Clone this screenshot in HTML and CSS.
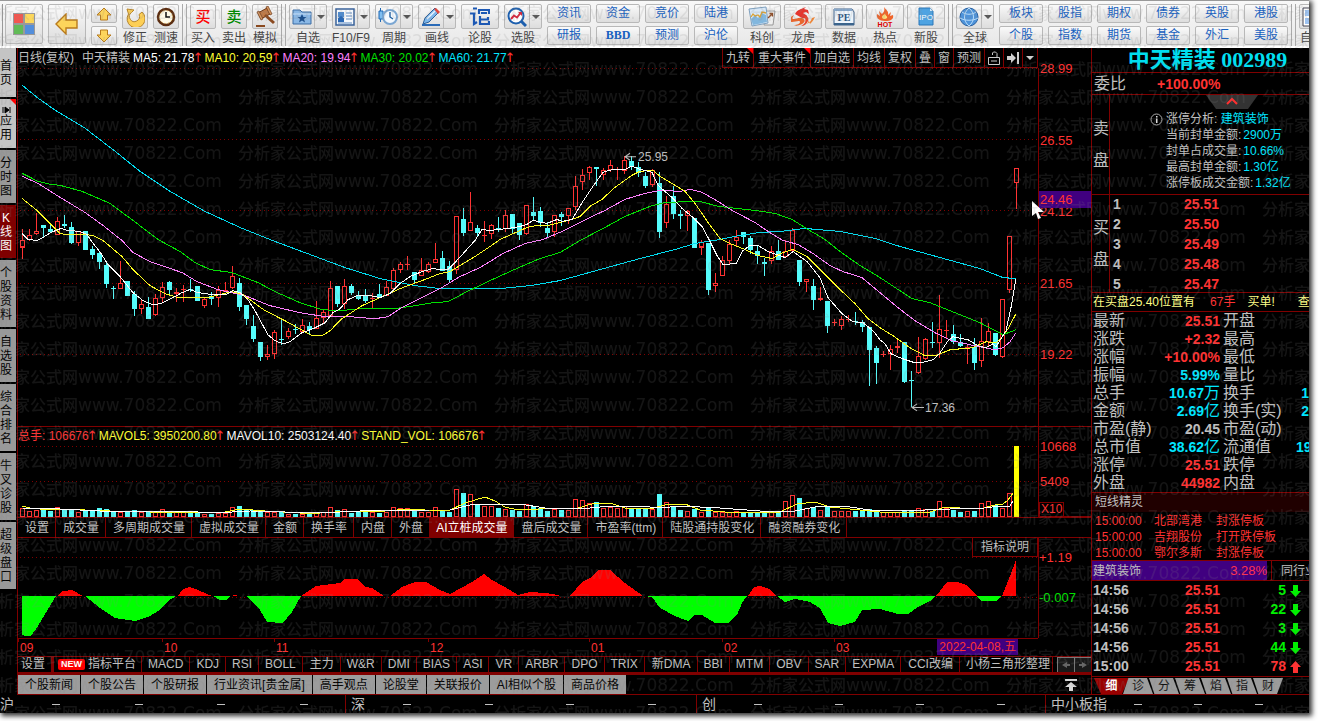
FILE: index.html
```html
<!DOCTYPE html>
<html lang="zh-CN">
<head>
<meta charset="utf-8">
<title>中天精装 002989</title>
<link rel="stylesheet" href="styles.css">
</head>
<body>
<div class="app">
<header class="toolbar">
  <div class="group first">
    <button class="big tall" aria-label="主页"><svg width="22" height="22" viewBox="0 0 22 22"><path fill="#999" d="M0 0h22v22H0z"/><path fill="#f4564f" d="M1 1h9v9H1z"/><path fill="#fcd75c" d="M12 1h9v9h-9z"/><path fill="#62bb57" d="M1 12h9v9H1z"/><path fill="#538edb" d="M12 12h9v9h-9z"/></svg></button>
    <button class="big tall" aria-label="返回"><svg width="24" height="22" viewBox="0 0 24 22"><path d="M1 11 11 1v6h11v8H11v6z" fill="#fdd45b" stroke="#b87a1c" stroke-width="1.4"/></svg></button>
    <div class="stack narrow">
      <button aria-label="上"><svg width="16" height="14" viewBox="0 0 16 14"><path d="M8 1 15 8h-3.500v5h-7V8H1z" fill="#fdd45b" stroke="#b87a1c"/></svg></button>
      <button aria-label="下"><svg width="16" height="14" viewBox="0 0 16 14"><path d="M8 13 15 6h-3.500V1h-7v5H1z" fill="#fdd45b" stroke="#b87a1c"/></svg></button>
    </div>
    <button class="tool small"><span class="face"><svg width="20" height="20" viewBox="0 0 20 20"><path d="M2 2l7 1-2.500 2.500a5 5 0 1 0 7.500 2l3-2.500A9 9 0 1 1 3.500 7z" fill="#fdcf55" stroke="#b5842c"/></svg></span>修正</button>
    <button class="tool small"><span class="face"><svg width="20" height="20" viewBox="0 0 20 20"><circle cx="10" cy="10" r="8" fill="#fffbe8" stroke="#5b2d10" stroke-width="2.500"/><circle cx="10" cy="10" r="6.500" fill="none" stroke="#d8a23a" stroke-dasharray="1 2.400"/><path d="M10 5v5h4" fill="none" stroke="#111" stroke-width="1.500"/></svg></span>测速</button>
  </div>
  <span class="sep"></span>
  <div class="group">
    <button class="tool small"><span class="face glyph buy" aria-hidden="true">买</span>买入</button>
    <button class="tool small"><span class="face glyph sell" aria-hidden="true">卖</span>卖出</button>
    <button class="tool small"><span class="face"><svg width="22" height="22" viewBox="0 0 22 22"><path d="M4 7l9-5 3 6-9 5z" fill="#c07a45" stroke="#6b3514"/><path d="M3 6l2-1 4 8-2 1zM12 1l2-1 4 8-2 1z" fill="#d99a62" stroke="#6b3514" stroke-width=".7"/><path d="M11 9l9 8" stroke="#8a4a20" stroke-width="3"/><path d="M2 20h9" stroke="#8a4a20" stroke-width="2"/></svg></span>模拟</button>
  </div>
  <span class="sep"></span>
  <div class="group">
    <button class="tool"><span class="face split"><svg width="20" height="18" viewBox="0 0 20 18"><path d="M1 16V2h7l2 2h9v12z" fill="#8ab8e6" stroke="#3a6ca5"/><path d="M1 6h18" stroke="#c8e0f8"/><path d="M10 6l1.500 3h3L12 11l1 3.500L10 12.500 7 14.500 8 11 5.500 9h3z" fill="#1c4f8c"/></svg><i></i></span>自选</button>
    <button class="tool"><span class="face split"><svg width="20" height="18" viewBox="0 0 20 18"><path d="M1 1h18v16H1z" fill="#f6f9fd" stroke="#38629a" stroke-width="1.500"/><path d="M3 4h6v5H3z" fill="#4d8bd0"/><path d="M3 10l3-2 3 2v4H3z" fill="#2a68b5"/><path d="M11 5h6M11 8h6M11 11h6M3 15h14" stroke="#5d89c0"/></svg><i></i></span>F10/F9</button>
    <button class="tool"><span class="face split"><svg width="20" height="20" viewBox="0 0 20 20"><path d="M2.500 1v14" stroke="#1e69b5"/><path d="M1 4h4v8H1z" fill="#7dbdf0" stroke="#1e69b5"/><circle cx="12" cy="10" r="7" fill="#f3f9ff" stroke="#7aa6d2" stroke-width="2"/><path d="M12 5v5l3 2" fill="none" stroke="#2260a0" stroke-width="1.400"/></svg><i></i></span>周期</button>
    <button class="tool"><span class="face split"><svg width="20" height="20" viewBox="0 0 20 20"><path d="M1 18h18" stroke="#2a6bb8" stroke-width="2"/><path d="M2 17l2-6L14 1l4 4L8 15z" fill="#7db6ea" stroke="#2b5f9a"/><path d="M13 2l2-1 4 4-2 2z" fill="#e0483e"/><path d="M6 12l8-8" stroke="#e9f4ff" stroke-width="1.500"/></svg><i></i></span>画线</button>
    <button class="tool"><span class="face"><svg width="20" height="19" viewBox="0 0 20 19"><path d="M3 1.500h4M0 6.500h5.500M4 6v11l3-2M9 7V3h10v4M11 6h6M10 9v8h9v-3M10 12.500h8V10" fill="none" stroke="#1c58b4" stroke-width="2.200"/></svg></span>论股</button>
    <button class="tool"><span class="face split"><svg width="20" height="20" viewBox="0 0 20 20"><circle cx="9" cy="9" r="7.500" fill="#fff" stroke="#1d5fae" stroke-width="2"/><path d="M14 14l5 5" stroke="#1d5fae" stroke-width="3"/><path d="M4 12l3-3.500 3 2L13.500 6" fill="none" stroke="#d6263c" stroke-width="2"/><path d="M11 5h4v4z" fill="#d6263c"/></svg><i></i></span>选股</button>
    <div class="stack"><button>资讯</button><button>研报</button></div>
    <div class="stack"><button>资金</button><button><b>BBD</b></button></div>
    <div class="stack"><button>竞价</button><button>预测</button></div>
    <div class="stack"><button>陆港</button><button>沪伦</button></div>
  </div>
  <div class="group tight">
    <button class="tool"><span class="face"><svg width="28" height="21" viewBox="0 0 28 21"><path d="M18 5h9l-2 14h-9z" fill="#eee" stroke="#999"/><path d="M1 3l17-2 2 16-16 3z" fill="#d9e9f8" stroke="#7e9fbd"/><path d="M3 13l4-4 3 3 4-5 4 2 1 7-14 3z" fill="#82b7de"/><path d="M3 11l2-3 2 2 3-1 2 2 2-5 4 1" fill="none" stroke="#d9a235" stroke-width="1.300"/><path d="M20 12l4-4M21.500 7.500h3v3" fill="none" stroke="#8d4a24" stroke-width="1.400"/></svg></span>科创</button>
    <button class="tool"><span class="face"><svg width="24" height="21" viewBox="0 0 24 21"><path d="M10 3l5-2-2 2 4 1 1 4-3-2-3 1 3 2c3 2 0 4-4 3L4 8C6 4 8 4 10 3z" fill="#e5352e"/><path d="M3 9c-2 3-2 4 0 4s5-2 8-1 4 4 0 6-6 2-8 1c3 0 6-1 6-3s-5 0-8 0-3-5 2-7z" fill="#e8662e"/><path d="M17 12c1 1 1 4-1 6 3-2 4-3 5-6l3-1c-1 2-2 4-5 7" fill="#ef8637"/><path d="M13 10c4 0 5 2 4 5s-4 5-7 5c4-2 6-5 3-10z" fill="#e8472e"/></svg></span>龙虎</button>
    <button class="tool"><span class="face"><svg width="22" height="18" viewBox="0 0 22 18"><path d="M1 1h18l2 3v13H1z" fill="#eef5fc" stroke="#3f638c"/><path d="M1 1h18v2H1z" fill="#87a8cb"/><path d="M1 16h20" stroke="#3b648c" stroke-width="2"/><text x="11" y="13" class="pe">PE</text></svg></span>数据</button>
    <button class="tool"><span class="face"><svg width="20" height="22" viewBox="0 0 20 22"><path d="M9 1c2 3 5 4 4 8l3-3-1 4 3-1c1 4-2 6-8 6S1 12 2 8l3 2-1-5 3 3c2-2 3-4 2-7z" fill="#f0642a"/><path d="M10 7c0 3 3 3 2 5-2 2-5 1-5-1s3-2 3-4z" fill="#ffe07a"/><text x="10" y="21" class="hot">HOT</text></svg></span>热点</button>
    <button class="tool"><span class="face"><svg width="16" height="19" viewBox="0 0 16 19"><path d="M1 1h11l3 3v14H1z" fill="#4ea3e2" stroke="#2a76b8"/><path d="M12 1v3h3" fill="#d4ebfc"/><text x="8" y="13" class="ipo">IPO</text></svg></span>新股</button>
  </div>
  <span class="sep"></span>
  <div class="group">
    <button class="tool"><span class="face split"><svg width="20" height="20" viewBox="0 0 20 20"><circle cx="10" cy="10" r="9" fill="#4d93da" stroke="#2c62a0"/><path d="M3 5c4 3 10 3 14 0M1 11c5 3 13 3 18 0M10 1c-6 5-6 13 0 18M10 1c6 5 6 13 0 18" fill="none" stroke="#b9dcf8"/></svg><i></i></span>全球</button>
    <div class="stack"><button>板块</button><button>个股</button></div>
    <div class="stack"><button>股指</button><button>指数</button></div>
    <div class="stack"><button>期权</button><button>期货</button></div>
    <div class="stack"><button>债券</button><button>基金</button></div>
    <div class="stack"><button>英股</button><button>外汇</button></div>
    <div class="stack"><button>港股</button><button>美股</button></div>
  </div>
  <span class="sep"></span>
  <div class="group">
    <button class="tool"><span class="face"><svg width="32" height="20" viewBox="0 0 32 20"><path d="M1 1h30v18H1z" fill="#fff" stroke="#445"/><path d="M3 3h7v6H3zM3 11h7v6H3z" fill="#9dc2f0"/></svg></span>自定义</button>
  </div>
</header>

<div class="main">
<nav class="side">
  <button class="light head">首页</button>
  <button class="light head corner"><svg width="9" height="8" viewBox="0 0 9 8"><path d="M1 1v6M3 1v6l4-3zM8 1v6" stroke="#000" fill="#000"/></svg>应用</button>
  <button>分时图</button>
  <button class="on">K线图</button>
  <button>个股资料</button>
  <button>自选股</button>
  <button>综合排名</button>
  <button>牛叉诊股</button>
  <button>超级盘口</button>
</nav>

<main class="center">
  <div class="legend-row">
    <div class="legend"><span>日线(复权)</span><span class="nm">中天精装</span><span class="w">MA5: 21.78<em>↑</em></span><span class="y">MA10: 20.59<em>↑</em></span><span class="p">MA20: 19.94<em>↑</em></span><span class="g">MA30: 20.02<em>↑</em></span><span class="c">MA60: 21.77<em>↑</em></span></div>
    <div class="mini"><button class="corner">九转</button><button class="corner wide">重大事件</button><button>加自选</button><button>均线</button><button>复权</button><button>叠</button><button>窗</button><button>预测</button><button aria-label="锁定"><svg width="12" height="14" viewBox="0 0 12 14"><path d="M.5 6.500h11v7H.5zM3 10h6M4.500 4V2l1-1h2l1.500 1.500V6" fill="none" stroke="#c8c8c8"/></svg></button><button aria-label="右移"><svg width="12" height="12" viewBox="0 0 12 12"><path d="M0 4h4V1l5 5-5 5V8H0zM10 0h2v12h-2z" fill="#d0d0d0"/></svg></button><button aria-label="更多"><svg width="8" height="4" viewBox="0 0 8 4"><path d="M0 0h8L4 4z" fill="#d0d0d0"/></svg></button></div>
    <div class="axis"></div>
  </div>
  <section class="pane price">
    <svg class="plot" id="price" viewBox="18 68 1020 357" preserveAspectRatio="none"></svg>
    <div class="axis ticks"><span>28.99</span><span>26.55</span><span>24.12</span><span>21.65</span><span>19.22</span><b class="cursor-price">24.46</b></div>
    <svg class="pointer" width="12" height="18" viewBox="0 0 12 18"><path d="M0 0v15l4-3 2 6 3-1-3-6h6z" fill="#fff"/></svg>
  </section>
  <div class="vol-legend"><div class="legend"><span class="r">总手: 106676<em>↑</em></span><span class="y">MAVOL5: 3950200.80<em>↑</em></span><span class="w">MAVOL10: 2503124.40<em>↑</em></span><span class="y">STAND_VOL: 106676<em>↑</em></span></div><div class="axis"></div></div>
  <section class="pane volume">
    <svg class="plot" id="volume" viewBox="18 446 1020 71" preserveAspectRatio="none"></svg>
    <div class="axis vticks"><span>10668</span><span>5409</span><span class="unit">X10</span></div>
  </section>
  <div class="tabs voltabs"><button>设置</button><button>成交量</button><button>多周期成交量</button><button>虚拟成交量</button><button>金额</button><button>换手率</button><button>内盘</button><button>外盘</button><button class="on">AI立桩成交量</button><button>盘后成交量</button><button>市盈率(ttm)</button><button>陆股通持股变化</button><button>融资融券变化</button></div>
  <section class="pane wave">
    <svg class="plot" id="wave" viewBox="18 538 1020 100" preserveAspectRatio="none"></svg>
    <div class="axis wticks"><span>+1.19</span><span class="g">-0.007</span></div>
    <button class="explain">指标说明</button>
  </section>
  <div class="dates"><span>09</span><span>10</span><span>11</span><span>12</span><span>01</span><span>02</span><span>03</span><b>2022-04-08,五</b></div>
  <div class="tabs indtabs"><button class="set">设置</button><button class="new"><mark>NEW</mark>指标平台</button><button>MACD</button><button>KDJ</button><button>RSI</button><button>BOLL</button><button class="cjk">主力</button><button>W&amp;R</button><button>DMI</button><button>BIAS</button><button>ASI</button><button>VR</button><button>ARBR</button><button>DPO</button><button>TRIX</button><button class="cjk">新DMA</button><button>BBI</button><button>MTM</button><button>OBV</button><button>SAR</button><button>EXPMA</button><button class="cjk">CCI改编</button><button class="last">小杨三角形整理</button><button class="scroll" aria-label="左"><svg width="8" height="6" viewBox="0 0 8 6"><path d="M0 3l5-3v2h3v2H5v2z" fill="#666"/></svg></button><button class="scroll" aria-label="右"><svg width="8" height="6" viewBox="0 0 8 6"><path d="M8 3L3 0v2H0v2h3v2z" fill="#666"/></svg></button></div>
  <div class="news"><button>个股新闻</button><button>个股公告</button><button>个股研报</button><button>行业资讯[贵金属]</button><button>高手观点</button><button>论股堂</button><button>关联报价</button><button>AI相似个股</button><button>商品价格</button><svg class="totop" width="12" height="12" viewBox="0 0 12 12"><path d="M0 0h12v2H0zM6 3l6 5H8v4H4V8H0z" fill="#d8d8d8"/></svg></div>
</main>

<aside class="quote">
  <h1>中天精装 <span>002989</span></h1>
  <div class="ratio"><span>委比</span><b>+100.00%</b></div>
  <div class="sellbox"><div class="vlabel">卖盘</div>
    <div class="limit">
      <svg class="fold" width="52" height="14" viewBox="0 0 52 14"><path d="M0 0h52L42 14H10z" fill="#333"/><path d="M21 9l5-5 5 5" fill="none" stroke="#ff3030" stroke-width="2"/></svg>
      <svg class="info" width="13" height="13" viewBox="0 0 13 13"><circle cx="6.500" cy="6.500" r="5.500" fill="none" stroke="#aaa"/><path d="M6 3h1.500v1.500H6zM6 5.500h1.500V10H6z" fill="#ddd"/></svg>
      <p>涨停分析: <a href="#sector">建筑装饰</a></p><p>当前封单金额:<i>2900万</i></p><p>封单占成交量:<i>10.66%</i></p><p>最高封单金额:<i>1.30亿</i></p><p>涨停板成交金额:<i>1.32亿</i></p>
    </div>
  </div>
  <div class="buybox"><div class="vlabel">买盘</div>
    <ol><li><span>1</span><b>25.51</b></li><li><span>2</span><b>25.50</b></li><li><span>3</span><b>25.49</b></li><li><span>4</span><b>25.48</b></li><li><span>5</span><b>25.47</b></li></ol>
  </div>
  <div class="notice"><span>在买盘25.40位置有</span><em>67手</em><span class="order">买单!</span><span>查</span></div>
  <table class="facts">
    <tr><th>最新</th><td class="r">25.51</td><th>开盘</th><td></td></tr>
    <tr><th>涨跌</th><td class="r">+2.32</td><th>最高</th><td></td></tr>
    <tr><th>涨幅</th><td class="r">+10.00%</td><th>最低</th><td></td></tr>
    <tr><th>振幅</th><td class="c">5.99%</td><th>量比</th><td></td></tr>
    <tr><th>总手</th><td class="c">10.67<i>万</i></td><th>换手</th><td class="c">1</td></tr>
    <tr><th>金额</th><td class="c">2.69<i>亿</i></td><th>换手(实)</th><td class="c">2</td></tr>
    <tr><th>市盈(静)</th><td>20.45</td><th>市盈(动)</th><td></td></tr>
    <tr><th>总市值</th><td class="c">38.62<i>亿</i></td><th>流通值</th><td class="c">19</td></tr>
    <tr><th>涨停</th><td class="r">25.51</td><th>跌停</th><td></td></tr>
    <tr><th>外盘</th><td class="r">44982</td><th>内盘</th><td></td></tr>
  </table>
  <h2>短线精灵</h2>
  <ul class="alerts"><li><time>15:00:00</time><span>北部湾港</span><span>封涨停板</span></li><li><time>15:00:00</time><span>吉翔股份</span><span>打开跌停板</span></li><li><time>15:00:00</time><span>鄂尔多斯</span><span>封涨停板</span></li></ul>
  <div class="sector" id="sector"><p><span>建筑装饰</span><em>3.28%</em></p><button>同行业</button></div>
  <ul class="trades">
    <li><time>14:56</time><b>25.51</b><b class="dn">5</b><svg width="11" height="12" viewBox="0 0 11 12"><path d="M3 0h5v6h3l-5.500 6L0 6h3z" fill="#00f000"/></svg></li>
    <li><time>14:56</time><b>25.51</b><b class="dn">22</b><svg width="11" height="12" viewBox="0 0 11 12"><path d="M3 0h5v6h3l-5.500 6L0 6h3z" fill="#00f000"/></svg></li>
    <li><time>14:56</time><b>25.51</b><b class="dn">3</b><svg width="11" height="12" viewBox="0 0 11 12"><path d="M3 0h5v6h3l-5.500 6L0 6h3z" fill="#00f000"/></svg></li>
    <li><time>14:56</time><b>25.51</b><b class="dn">44</b><svg width="11" height="12" viewBox="0 0 11 12"><path d="M3 0h5v6h3l-5.500 6L0 6h3z" fill="#00f000"/></svg></li>
    <li><time>15:00</time><b>25.51</b><b>78</b><svg width="11" height="12" viewBox="0 0 11 12"><path d="M3 12h5V6h3L5.500 0 0 6h3z" fill="#ff3232"/></svg></li>
  </ul>
  <div class="qtabs"><button class="on">细</button><button class="lead">诊</button><button>分</button><button>筹</button><button>焰</button><button>指</button><button class="tail">财</button></div>
</aside>
</div>

<footer class="status">
  <div><span>沪</span><i></i><i></i><i></i><i></i></div>
  <div><span>深</span><i></i><i></i><i></i><i></i></div>
  <div><span>创</span><i></i><i></i><i></i><i></i></div>
  <div class="sme"><span>中小板指</span><i></i><i></i><i></i></div>
</footer>
<svg class="watermark" aria-hidden="true"><defs><pattern id="wm" x="-18" y="0" width="256" height="28" patternUnits="userSpaceOnUse"><text x="0" y="19"><tspan class="wm-cn">分析家公式网</tspan><tspan class="wm-en">www.70822.Com</tspan></text></pattern></defs><rect width="100%" height="100%" fill="url(#wm)"/></svg>
</div>
<script src="chart.js"></script>
</body>
</html>
```

FILE: styles.css
```css
* { box-sizing: border-box; margin: 0; padding: 0; }
html, body { height: 100%; }
body { background: #fff; padding: 0 9px 8px 0; overflow: hidden; font: 12px/16px "Liberation Sans", "Noto Sans CJK SC", sans-serif; color: #c0c0c0; }
button { font: inherit; color: inherit; background: none; border: 0; white-space: nowrap; cursor: pointer; }
em, i { font-style: normal; }
svg { display: block; flex: none; }
ul, ol { list-style: none; }
a { color: inherit; text-decoration: none; }

.app { position: relative; height: 100%; display: flex; flex-direction: column; background: #000; box-shadow: 2px 2px 5px 1px #333; overflow: hidden; }
.watermark { position: absolute; inset: 0; width: 100%; height: 100%; pointer-events: none; fill: rgba(128, 128, 128, .16); }
.wm-cn { font: 500 16px "Noto Sans CJK SC", sans-serif; }
.wm-en { font: 17px "DejaVu Sans", sans-serif; }

.w { color: #fff; }
.y { color: #ff3; }
.p { color: #ff80ff; }
.g { color: #00e000; }
.c { color: #00e6ff; }
.r { color: #ff3232; }

/* toolbar */
.toolbar { flex: none; height: 48px; display: flex; padding-top: 3px; overflow: hidden; background: linear-gradient(#f8f8f8, #e8e8e8); border-top: 1px solid #999; border-bottom: 2px solid #fff; color: #444; }
.group { display: flex; gap: 5px; flex: none; align-items: flex-start; }
.group.first { padding-left: 2px; margin-left: 2px; border-left: 1px solid #999; }
.group.tight { gap: 3px; margin-left: 5px; }
.sep { flex: none; width: 5px; margin: 0 3px; height: 42px; border: 1px solid #aaa; border-width: 0 1px; }
.big, .face, .stack button { background: linear-gradient(#fafafa, #ddd); border: 1px solid #b8b8b8; border-radius: 2px; }
.big { width: 38px; height: 40px; display: flex; align-items: center; justify-content: center; }
.tool { width: 38px; display: flex; flex-direction: column; align-items: center; line-height: 18px; }
.tool.small { width: 26px; }
.face { width: 100%; height: 25px; display: flex; align-items: center; justify-content: center; overflow: hidden; }
.face.split { justify-content: flex-start; padding-left: 2px; }
.face.split i { flex: 1; height: 100%; margin-left: 2px; border-left: 1px solid #bbb; display: flex; align-items: center; justify-content: center; }
.face.split i::after { content: ""; border: 4px solid transparent; border-top-color: #555; border-bottom: 0; }
.glyph { font-size: 15px; font-weight: 500; }
.glyph.buy { color: #f00; }
.glyph.sell { color: #080; }
.pe, .hot, .ipo { font-family: "Liberation Serif", serif; font-weight: bold; font-size: 10px; text-anchor: middle; fill: #2d5580; }
.hot { font-size: 7px; fill: #d00; font-family: "Liberation Sans", sans-serif; }
.ipo { font: 8px "Liberation Sans", sans-serif; fill: #fff; }
.stack { width: 44px; display: flex; flex-direction: column; gap: 3px; color: #1660c0; }
.stack.narrow { width: 26px; }
.stack button { height: 19px; line-height: 17px; display: flex; align-items: center; justify-content: center; }
.stack b { font-family: "Liberation Serif", serif; font-size: 12px; }

/* frame */
.main { flex: 1; min-height: 0; display: flex; }
.side { flex: none; width: 17px; background: #000; padding-right: 1px; display: flex; flex-direction: column; }
.side button { width: 16px; padding: 6px 4px 5px 0; background: #999; color: #000; line-height: 14px; white-space: normal; word-break: break-all; border-bottom: 2px solid #000; display: block; }
.side .light { background: #c4c4c4; }
.side .head { min-height: 51px; }
.side .on { background: #800000; color: #fff; }
.side svg { margin-left: 2px; }
.corner { position: relative; }
.corner::after { content: ""; position: absolute; top: 0; right: 0; border: 3px solid #f00; border-left-color: transparent; border-bottom-color: transparent; }

.center { flex: 1; min-width: 0; display: flex; flex-direction: column; border-left: 1px solid #800000; }
.axis { flex: none; width: 53px; border-left: 1px solid #800000; color: #ff3232; font-size: 13px; }
.legend-row, .vol-legend { flex: none; height: 20px; display: flex; justify-content: space-between; line-height: 20px; }
.legend-row .axis { border: 0; }
.vol-legend { border-top: 1px solid #800000; line-height: 18px; }
.legend { flex: 1; display: flex; gap: 3px; white-space: nowrap; }
.legend .nm { margin-left: 5px; }
.legend em { display: inline-block; width: 7px; color: #ff3232; font: 13px/13px "DejaVu Sans", sans-serif; text-indent: -2px; }
.mini { display: flex; height: 20px; border: 1px solid #800000; border-width: 0 1px 1px 0; }
.mini button { padding: 0 3px; border-left: 1px solid #800000; line-height: 18px; display: flex; align-items: center; }
.mini .wide { padding: 0 4px; }
.pane { position: relative; display: flex; min-height: 0; }
.plot { flex: 1; min-width: 0; height: 100%; }
.price { flex: 1; }
.ticks { display: flex; flex-direction: column; height: 100%; position: relative; overflow: visible; }
.ticks span { flex: 0 0 20%; line-height: 16px; margin-top: -7px; margin-bottom: 7px; padding-left: 1px; }
.cursor-price { position: absolute; top: 123px; left: 0; width: 100%; height: 17px; line-height: 17px; padding-left: 1px; background: #400080; font-weight: normal; }
.pointer { position: absolute; top: 133px; right: 47px; }
.volume { flex: 0 0 71px; }
.vticks { position: relative; border-bottom: 1px solid #800000; display: flex; flex-direction: column; }
.vticks span { flex: 0 0 35px; line-height: 16px; margin-top: -7px; margin-bottom: 7px; padding-left: 1px; }
.vticks .unit { flex: none; align-self: flex-start; border: 1px solid #800000; line-height: 13px; margin: -14px 0 0; padding: 0 1px; font-size: 12px; }
.wave { flex: 0 0 101px; border: 1px solid #800000; border-width: 1px 0 0; }
.wticks { padding-top: 12px; display: flex; flex-direction: column; gap: 24px; }
.explain { position: absolute; top: 0; right: 53px; width: 66px; height: 19px; border: 1px solid #800000; border-top: 0; background: #000; }
.dates { flex: none; position: relative; height: 18px; margin-right: 53px; border-top: 1px solid #800000; display: grid; grid-template-columns: 144fr 112fr 154fr 161fr 133fr 112fr 204fr; color: #ff3232; line-height: 18px; }
.dates span { padding-left: 2px; background: linear-gradient(#800000, #800000) 0 0 / 1px 3px no-repeat; }
.dates b { position: absolute; top: 0; right: 20px; height: 16px; line-height: 17px; padding: 0 2px; background: #400080; font-weight: normal; }
.tabs { flex: none; display: flex; white-space: nowrap; }
.tabs button { border-right: 1px solid #800000; padding: 0 6px 0 7px; }
.voltabs { height: 20px; border-top: 1px solid #800000; }
.voltabs .on { background: #800000; color: #fff; padding: 0 6px; }
.indtabs { height: 19px; border: 1px solid #800000; border-width: 1px 0 3px; line-height: 15px; }
.indtabs button { padding: 0 6px; }
.indtabs .cjk { padding: 0 6px 0 7px; }
.indtabs .set { padding: 0 6px 0 3px; }
.indtabs .new { border-left: 2px solid #800000; padding: 0 5px 0 4px; display: flex; align-items: center; gap: 3px; }
.indtabs mark { background: #f00; color: #fff; font-size: 9px; font-weight: bold; line-height: 11px; padding: 0 3px; border-radius: 2px; }
.indtabs .last { padding: 0 2px 0 6px; margin-right: auto; }
.indtabs .scroll { flex: none; width: 17px; border: 1px solid #777; border-width: 1px 0 0 1px; padding: 0 4px; background: #1a1a1a; }
.news { flex: none; height: 20px; display: flex; border-bottom: 1px solid #800000; color: #000; align-items: stretch; }
.news button { background: #9c9c9c; padding: 0 7px; border-right: 1px solid #000; }
.totop { margin: 4px 14px 0 auto; }

/* quote panel */
.quote { flex: none; width: 218px; border-left: 1px solid #800000; display: flex; flex-direction: column; overflow: hidden; white-space: nowrap; }
.quote > * { flex: none; border-bottom: 1px solid #800000; }
.quote h1 { height: 25px; padding-left: 14px; font: bold 22px/24px "Liberation Serif", "Noto Sans CJK SC", serif; color: #00dff0; text-align: center; }
.ratio { height: 22px; line-height: 22px; display: flex; padding-left: 2px; font-size: 16px; gap: 31px; }
.ratio b { color: #ff3232; font-size: 14px; }
.sellbox, .buybox { display: flex; }
.sellbox { height: 100px; }
.vlabel { width: 18px; font-size: 16px; line-height: 32px; white-space: normal; display: flex; align-items: center; word-break: break-all; border-right: 1px solid #800000; padding-left: 1px; }
.limit { position: relative; flex: 1; padding: 16px 0 0 56px; }
.limit a, .limit i { color: #00e6ff; }
.limit i { margin-left: 2px; }
.fold { position: absolute; top: 0; left: 96px; }
.info { position: absolute; top: 18px; left: 40px; }
.buybox { height: 98px; }
.buybox ol { flex: 1; }
.buybox li { display: flex; line-height: 18px; font-size: 14px; font-weight: bold; height: 20px; }
.buybox li span { width: 74px; padding-left: 3px; }
.buybox b { color: #ff3232; }
.notice { height: 19px; line-height: 18px; display: flex; gap: 15px; padding-left: 1px; color: #ff8; }
.notice em { color: #ff3232; }
.notice .order { margin: 0 8px 0 -3px; }
.facts { width: 217px; table-layout: fixed; border-collapse: collapse; }
.facts tr { height: 18px; line-height: 18px; }
.facts th { width: 58px; padding-left: 1px; font-size: 16px; font-weight: normal; text-align: left; }
.facts td { width: 70px; text-align: right; font-size: 14px; font-weight: bold; }
.facts td i { font-size: 16px; line-height: 16px; font-weight: normal; }
.facts th:nth-child(3) { width: 76px; padding-left: 3px; }
.facts td:nth-child(4) { width: 13px; }
.quote h2 { height: 19px; font-size: 12px; font-weight: normal; line-height: 18px; padding-left: 3px; background: #200000; border: 0; }
.alerts { padding: 1px 0 0 3px; color: #ff3232; height: 49px; }
.alerts li { display: grid; grid-template-columns: 59px 62px auto; }
.sector { height: 20px; line-height: 20px; display: flex; }
.sector p { flex: none; width: 175px; display: flex; justify-content: space-between; background: #400080; padding-left: 1px; }
.sector em { color: #ff3250; font-size: 13px; }
.sector button { flex: none; margin-left: 4px; padding-left: 9px; border-left: 1px solid #800000; }
.trades { height: 96px; }
.trades li { display: grid; grid-template-columns: 58px 69px 66px 11px; align-items: center; height: 19px; line-height: 19px; font-size: 14px; padding-left: 1px; font-weight: bold; }
.trades b { text-align: right; color: #ff3232; }
.trades svg { margin-left: 4px; }
.trades .dn { color: #00f000; }
.qtabs { height: 18px; display: flex; padding: 1px 0 0 2px; flex: 1 0 18px; }
.qtabs button { width: 30px; margin-right: -4px; background: #9c9c9c; color: #111; height: 16px; clip-path: polygon(0 0, 80% 0, 100% 100%, 18% 100%); }
.qtabs .on { width: 35px; margin-right: -6px; background: #900; color: #fff; font-weight: bold; clip-path: polygon(0 0, 100% 0, 80% 100%, 20% 100%); }
.qtabs .lead { clip-path: polygon(18% 0, 80% 0, 100% 100%, 0 100%); }
.qtabs .tail { clip-path: polygon(0 0, 100% 0, 80% 100%, 18% 100%); }

.status { flex: none; height: 18px; display: grid; grid-template-columns: 345fr 351fr 349fr 264fr; font-size: 14px; line-height: 18px; }
.status div { display: flex; align-items: center; border-left: 1px solid #800000; padding: 0 3px 0 5px; }
.status div:first-child { border: 0; padding: 0; }
.status span { width: 15px; white-space: nowrap; }
.status .sme { padding-right: 20px; }
.status .sme span { width: 57px; }
.status i { flex: 1; }
.status i::after { content: ""; display: block; width: 8px; height: 1px; margin: 0 auto; background: #c0c0c0; }

/* plots */
.grid { stroke: #800000; stroke-dasharray: 1 3; }
.ma { fill: none; }
.note { font: 12px "Liberation Sans", sans-serif; fill: #c0c0c0; }
```

FILE: chart.js
```js
// One row per trading day: direction, high, body top, body bottom, low.
const days = `r229 240 247 258|r229 235 240 241|r213 231 234 235|c225 225 228 237|c225 229 232 232|r217 221 235 235|c215 224 226 228|c222 227 243 244|r231 231 243 246|c231 231 249 249
c246 248 254 258|c250 252 261 268|c261 264 283 287|c285 287 288 298|r260 282 288 288|c280 280 295 295|c290 293 308 315|r299 303 308 313|c296 306 318 318|r293 297 314 315
r281 286 297 302|c280 281 289 295|r287 291 293 301|r284 288 289 301|c278 288 289 291|c285 285 300 300|r297 298 305 307|c291 295 298 304|r285 289 297 306|r281 289 291 291
r265 275 287 288|c277 282 306 310|c304 304 318 324|c314 325 338 341|c341 341 356 360|r344 353 356 359|r329 331 353 358|c317 338 339 344|r327 330 336 338|c323 328 329 333
r318 324 331 331|c321 325 329 334|r300 317 328 328|r309 311 317 323|r280 287 315 315|c285 285 303 306|r278 285 303 308|c283 285 292 294|c290 294 298 299|c288 295 300 302
r292 297 298 307|c283 293 297 297|r280 286 295 295|r267 269 288 288|r261 263 269 272|r255 263 264 269|c271 271 279 282|r257 269 275 275|r261 263 271 272|r243 258 262 262
c250 257 270 270|c260 265 279 282|r216 216 269 273|c208 219 233 236|r192 222 231 231|c225 228 233 236|r221 235 236 242|r224 225 234 239|c217 228 229 232|r210 215 229 232
c214 214 229 233|c223 223 235 240|r205 205 234 235|c197 212 216 220|c207 211 223 227|c222 228 233 237|r215 215 232 237|c212 214 217 226|r208 208 216 224|r176 186 207 210
r169 175 182 190|r166 167 173 180|c167 167 169 186|r168 170 175 180|r160 165 170 172|r167 169 170 180|r156 160 171 174|c156 161 167 170|c162 167 173 177|c172 176 186 188
r169 170 185 187|c172 183 232 238|r196 204 223 228|c186 196 214 219|c210 214 216 229|r210 211 216 231|c218 218 247 247|r240 242 247 254|c243 243 289 294|r272 282 285 291
r255 259 275 275|r240 244 260 264|r230 237 241 246|c232 232 237 244|c236 238 249 253|c245 250 255 263|c257 261 263 275|r246 250 260 263|c240 250 259 259|r240 250 256 256
r228 230 250 250|c259 259 281 285|r278 278 281 291|c278 285 299 309|r286 297 299 300|c300 300 325 332|r318 321 322 325|r315 318 325 329|r314 318 319 321|c311 320 321 324
c319 321 326 331|c326 326 349 385|c345 347 362 383|r350 353 354 356|r344 348 353 369|r339 345 347 352|c341 341 381 382|c370 379 380 406|r336 355 372 373|r337 338 358 359
c321 341 342 347|r294 328 342 357|r319 329 330 337|c324 333 341 343|c333 341 345 346|r344 346 348 363|c337 346 362 369|r317 340 360 366|r322 330 341 346|c332 332 354 355
r298 298 356 357|r236 236 289 292|r168 168 183 209`.split(/[|\n]/).map(s => ({ up: s[0] === 'r', v: s.slice(1).split(' ').map(Number) }));

// Top edge of each volume bar, in plot units.
const volumes = `508 511 510 509 511 507 510 510 512 511 511 508 509 511 512 512 510 512 511 512 509 512 512 512 511 512 514 514 513 513 507 506 509 510 512 512 512 512 514 514 514 513 512 512 507 510 509 513 512 512 512 513 512 507 508 508 509 512 512 507
511 512 489 493 494 504 506 506 508 509 510 511 504 506 508 511 509 510 510 499 500 503 502 508 507 508 506 508 508 508 509 494 502 507 510 511 509 512 508 512 512 512 511 512 512 512 512 511 512 501 495 498 508 507 510 507 511 511 511 511 511 509 511
512 512 512 510 510 508 509 511 501 508 510 512 511 511 503 501 505 508 493 446`.split(/\s+/).map(Number);

const averages = {
  '#00dcf0': '22,85 38,98 55,110 85,128 115,151 140,171 170,191 205,211 240,227 275,241 310,254 345,267 380,278 415,285 440,288 500,288 530,285 560,280 600,269 640,258 675,249 695,243 720,239 740,235 760,232 780,231 805,228 840,231 875,238 900,246 940,257 980,268 1003,277 1016,278',
  '#00e000': '22,173 38,181 50,184 60,185 82,191 110,203 133,220 158,239 180,251 195,262 210,269 232,272 258,282 275,291 300,302 322,309 340,310 360,308 395,308 415,305 433,302 448,301 467,291 490,280 512,270 540,258 560,252 580,240 605,227 625,216 650,206 665,202 700,201 718,206 755,210 775,213 792,219 808,229 825,239 840,251 860,265 880,277 912,298 930,302 955,312 980,322 1003,334 1016,329',
  '#ff80ff': '22,176 38,183 60,197 85,212 103,225 122,240 133,252 150,261 182,272 197,281 218,289 245,295 270,305 300,312 325,316 350,316 375,318 388,316 400,308 420,298 440,288 460,276 480,267 503,253 525,243 543,239 562,231 588,218 605,210 625,199 645,193 660,190 680,191 690,189 702,192 718,201 732,210 755,222 768,231 783,240 798,244 813,253 830,265 843,271 862,277 880,292 898,307 915,320 935,332 952,340 975,345 995,349 1003,347 1010,341 1016,332',
  '#ffff20': '22,198 37,210 50,223 60,233 65,234 85,234 93,235 103,240 122,256 133,269 150,285 165,293 178,297 207,297 232,291 243,294 265,310 285,320 312,335 322,335 330,330 342,318 362,305 380,297 400,288 422,280 440,273 450,271 475,256 490,246 500,239 527,227 537,225 548,225 572,219 580,216 590,206 602,199 615,187 632,175 640,171 653,170 660,176 685,191 695,203 708,222 720,238 730,243 745,249 758,255 772,258 783,252 793,249 807,256 825,274 838,287 855,303 868,318 880,327 893,335 910,347 925,355 935,355 950,349 972,347 986,341 996,342 1003,335 1008,328 1016,313',
  '#ffffff': '22,233 28,239 37,240 43,237 51,232 61,228 68,230 80,231 87,234 91,240 101,253 108,264 120,276 133,292 143,300 153,304 161,303 173,297 182,292 190,289 198,292 212,294 226,294 233,290 240,292 248,299 255,310 262,323 268,334 275,340 283,343 290,341 302,332 313,328 325,322 333,312 340,308 348,299 357,295 370,295 380,297 390,293 400,283 410,276 422,271 433,268 440,269 448,269 455,262 475,240 482,229 490,230 508,228 520,226 527,224 533,220 547,223 557,219 562,221 572,219 583,201 593,186 603,172 613,169 625,169 632,166 640,169 652,172 658,185 673,198 682,208 693,217 702,226 708,237 717,255 723,264 736,263 743,250 750,245 758,245 768,251 785,257 793,251 807,261 820,277 828,297 842,313 853,321 863,322 873,330 880,339 885,343 891,353 900,357 915,362 921,362 933,359 940,352 948,340 953,336 968,339 978,345 986,347 993,343 996,346 1001,338 1006,330 1011,307 1016,278'
};

const volumeAverages = {
  '#ffff20': '22,506 30,508 50,510 70,509 85,510 110,511 150,512 180,512 205,513 225,512 240,509 265,511 300,513 320,513 350,511 385,511 410,509 440,511 450,510 465,503 485,497 495,501 505,507 518,510 560,508 575,509 595,503 610,503 625,508 650,509 665,505 685,504 700,510 725,512 780,512 797,504 815,502 830,507 860,510 880,512 930,512 945,507 960,508 980,509 995,505 1003,504 1008,500 1013,493',
  '#ffffff': '22,508 60,509 100,511 180,511 215,513 250,511 320,513 360,511 430,510 450,510 470,505 485,504 520,504 545,508 590,508 610,506 640,506 660,508 680,506 720,508 760,511 795,511 820,506 850,507 870,510 900,511 950,509 985,508 1000,506 1010,506 1013,501'
};

const rises = ['57,596 63,591 72,590 83,596', '178,596 183,589 190,587 198,590 212,596', '231,596 235,595 239,596', '301,596 316,586 340,583 345,579 358,579 365,587 372,588 384,596', '390,596 402,587 415,582 426,582 440,590 450,594 472,582 484,574 492,580 505,587 518,595 530,592 545,593 553,594 561,596', '570,596 582,582 590,578 598,570 610,570 625,583 643,596', '748,596 754,587 760,586 770,589 776,596', '936,596 947,582 957,582 966,585 977,596', '1002,596 1010,576 1016,560 1016,596'];
const falls = ['22,596 22,635 25,636 31,636 38,626 48,609 56,596', '85,596 100,608 115,618 135,621 150,616 158,611 168,601 176,596', '213,596 220,600 226,600 231,596', '246,596 260,610 267,622 283,623 292,612 301,596', '644,596 652,597 660,608 675,616 688,621 695,615 702,615 715,623 728,623 737,615 742,603 747,596', '777,596 785,602 795,599 810,602 820,608 828,623 840,626 855,622 862,610 880,609 898,614 908,614 918,607 930,601 936,596', '977,596 981,601 997,601 1001,596'];

const RED = '#ff3232', CYAN = '#54fcfc';
const rect = (x, y, w, h, fill) => `<rect x="${x}" y="${y}" width="${w}" height="${h}" fill="${fill}"/>`;
const hollow = (x, y, w, h) => `<rect x="${x + .5}" y="${y + .5}" width="${w - 1}" height="${Math.max(h - 1, 0)}" fill="none" stroke="${RED}"/>`;
const gridLine = y => `<path class="grid" d="M20 ${y + .5}H1038"/>`;
const lines = set => Object.entries(set).map(([color, pts]) => `<polyline class="ma" stroke="${color}" points="${pts}"/>`).join('');

const candles = days.map(({ up, v: [hi, top, bottom, low] }, i) => {
  const x = 22 + i * 7;
  const body = Math.max(bottom - top, 1);
  if (!up) return rect(x, hi, 1, low - hi, CYAN) + rect(x - 2, top, 5, body, CYAN);
  return rect(x, hi, 1, top - hi, RED) + rect(x, bottom, 1, Math.max(low - bottom, 0), RED) +
    (body > 2 ? hollow(x - 2, top, 5, body) : rect(x - 2, top, 5, body, RED));
}).join('');

const bars = volumes.map((y, i) => {
  const x = 20 + i * 7;
  if (i === volumes.length - 1) return rect(x, y, 5, 71, '#ffff00');
  return days[i].up ? hollow(x, y, 5, 517 - y) : rect(x, y, 5, 517 - y, CYAN);
}).join('');

const crisp = body => `<g shape-rendering="crispEdges">${body}</g>`;

document.getElementById('price').innerHTML =
  crisp([68, 139, 210, 282, 353].map(gridLine).join('') + candles + lines(averages)) +
  '<path d="M625 156.500h11M630 153l-5 3.500 5 3.500M912 406.500h12M917 403l-5 3.500 5 3.500" stroke="#c0c0c0" fill="none"/>' +
  '<text class="note" x="638" y="161">25.95</text><text class="note" x="925" y="411">17.36</text>';

document.getElementById('volume').innerHTML = crisp(gridLine(446) + gridLine(481) + bars + lines(volumeAverages));

document.getElementById('wave').innerHTML = crisp(gridLine(557) + gridLine(597) +
  rises.map(p => `<polygon points="${p}" fill="#ff0000"/>`).join('') +
  falls.map(p => `<polygon points="${p}" fill="#00ff00"/>`).join(''));
```
